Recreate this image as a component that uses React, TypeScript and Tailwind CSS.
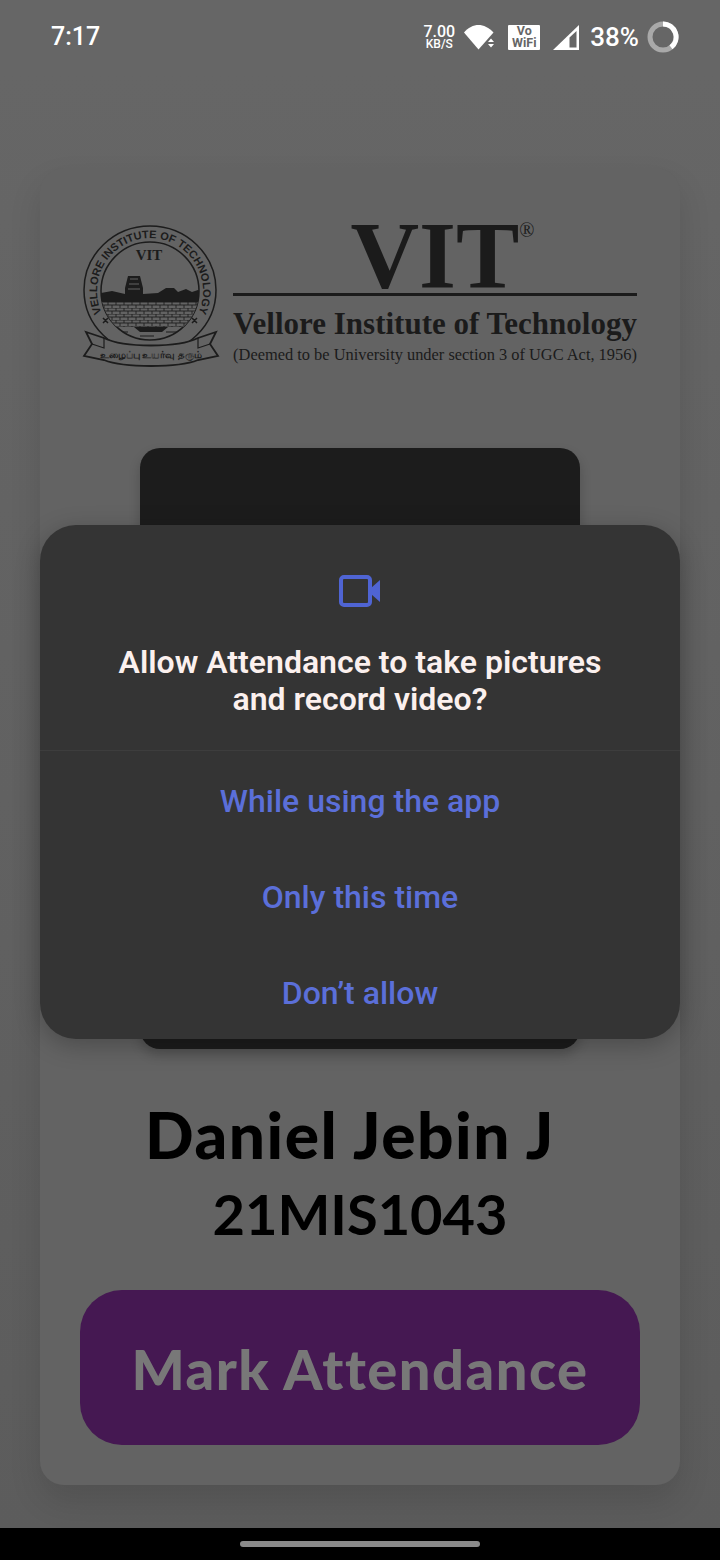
const roboto = "font-['Roboto',sans-serif]";

function WifiIcon() {
  return (
    <svg width="32" height="26" viewBox="0 0 32 26">
      <path d="M0 8.5C4 3.5 9.500 1 14.500 1S25 3.500 29.500 8.500L14.500 25.500Z" fill="#fff" />
      <path d="M27 14.500l3 3.500h-6ZM24 20h6l-3 3.500Z" fill="#fff" />
    </svg>
  );
}

function SignalIcon() {
  return (
    <svg width="28" height="27" viewBox="0 0 28 27">
      <path d="M1 26L27 1V26Z" fill="#fff" />
      <path d="M17.500 13.500L24.500 7V23.500H17.500Z" fill="#666" />
    </svg>
  );
}

function BatteryRing() {
  return (
    <svg width="32" height="32" viewBox="0 0 32 32">
      <circle cx="16" cy="16" r="13" fill="none" stroke="#a9a9a9" strokeWidth="5" />
      <path d="M16 3A13 13 0 0 1 24 26.300" fill="none" stroke="#fff" strokeWidth="5" />
    </svg>
  );
}

function StatusBar() {
  return (
    <div className={`flex h-[74px] items-center pl-[51px] pr-[41px] text-white ${roboto}`}>
      <span className="text-[25px] font-medium">7:17</span>
      <div className="ml-auto flex items-center">
        <div className="flex w-[34px] flex-col items-center font-medium">
          <span className="text-[16px] leading-[15px]">7.00</span>
          <span className="text-[12px] leading-[11px]">KB/S</span>
        </div>
        <div className="ml-[8px]">
          <WifiIcon />
        </div>
        <div className="ml-[12px] flex h-[25px] w-[32px] flex-col items-center justify-center rounded-[1px] bg-white text-[12.500px] leading-[12px] font-bold text-[#666]">
          <span>Vo</span>
          <span>WiFi</span>
        </div>
        <div className="ml-[12px]">
          <SignalIcon />
        </div>
        <span className="ml-[10px] text-[26px] leading-none font-medium">38%</span>
        <div className="ml-[8px]">
          <BatteryRing />
        </div>
      </div>
    </div>
  );
}

function Seal() {
  const ink = '#1c1c1c';
  return (
    <svg width="138" height="144" viewBox="0 0 138 144" className="shrink-0">
      <defs>
        <path id="sealArc" d="M22.300 94A53 53 0 1 1 113.700 94" />
        <clipPath id="sealInner">
          <circle cx="68" cy="67" r="49" />
        </clipPath>
        <pattern id="bricks" width="8" height="6" patternUnits="userSpaceOnUse">
          <path d="M0 0H8M0 3H8M2 0V3M6 3V6" stroke={ink} strokeWidth="0.9" />
        </pattern>
      </defs>
      <ellipse cx="68" cy="66" rx="66" ry="64" fill="none" stroke={ink} strokeWidth="1.500" />
      <circle cx="68" cy="67" r="49" fill="none" stroke={ink} strokeWidth="1.500" />
      <text fontFamily="Liberation Sans" fontSize="11" fontWeight="700" fill={ink}>
        <textPath href="#sealArc" startOffset="50%" textAnchor="middle">
          VELLORE INSTITUTE OF TECHNOLOGY
        </textPath>
      </text>
      <text x="67" y="36" textAnchor="middle" fontFamily="Liberation Serif" fontSize="15" fontWeight="700" fill={ink}>
        VIT
      </text>
      <g clipPath="url(#sealInner)">
        <path d="M14 80V70L30 67L43 70V64L46 52H58L61 64V70L76 69L84 64H92L96 68L104 65L110 68L116 66L124 69V80Z" fill={ink} />
        <path d="M48 55H56M47 60H57M46 65H58" stroke="#636363" strokeWidth="1" />
        <rect x="18" y="78" width="102" height="25" fill="#636363" />
        <rect x="18" y="78" width="102" height="25" fill="url(#bricks)" />
        <path d="M52 103H86L80 108H58Z" fill={ink} />
        <path d="M30 108H46M58 112H72M84 108H100" stroke={ink} strokeWidth="1" />
      </g>
      <path d="M21 94L26 99M26 94L21 99M110 94L115 99M115 94L110 99" stroke={ink} strokeWidth="1.500" />
      <path
        d="M22 114C42 124 96 124 116 114L134 108L128 120L136 132L116 136C96 144 42 144 22 136L2 132L10 120L4 108Z"
        fill="#636363"
        stroke={ink}
        strokeWidth="1.800"
      />
      <path d="M22 114V124L10 120M116 114V124L128 120" fill="none" stroke={ink} strokeWidth="1.200" />
      <text
        x="69"
        y="134"
        textAnchor="middle"
        fontFamily="Noto Sans, sans-serif"
        fontSize="10"
        fontWeight="700"
        fill={ink}
      >
        உழைப்பு உயர்வு தரும்
      </text>
    </svg>
  );
}

function Logo() {
  return (
    <div className="flex items-start pl-[42px] text-[#1b1b1b]">
      <Seal />
      <div className="ml-[13px] flex w-[404px] flex-col items-center font-['Liberation_Serif',serif]">
        <div className="relative mt-[-8px] text-[95px] leading-[80px] font-bold">
          VIT
          <span className="absolute top-[4px] right-[-15px] text-[20px] leading-none font-normal">®</span>
        </div>
        <div className="mt-[-3px] h-[3px] w-full bg-[#1b1b1b]" />
        <div className="mt-[12px] text-[31px] leading-[32px] font-bold whitespace-nowrap">
          Vellore Institute of Technology
        </div>
        <div className="mt-[5px] text-[16.400px] leading-[20px] whitespace-nowrap">
          (Deemed to be University under section 3 of UGC Act, 1956)
        </div>
      </div>
    </div>
  );
}

function PermissionDialog() {
  return (
    <div className={`absolute top-[525px] left-[40px] w-[640px] rounded-[36px] bg-[#343434] shadow-[0_6px_24px_rgba(0,0,0,0.25)] ${roboto}`}>
      <div className="flex h-[226px] flex-col items-center border-b border-[#3d3d3d] pt-[50px]">
        <svg width="42" height="32" viewBox="0 0 42 32">
          <rect x="2" y="2" width="29" height="28" rx="3" fill="none" stroke="#4f64d3" strokeWidth="4" />
          <path d="M32 13L41 5V27L32 19Z" fill="#4f64d3" />
        </svg>
        <h2 className="mt-[37px] text-center text-[32px] leading-[37px] font-semibold text-[#fbf0ee]">
          Allow Attendance to take pictures
          <br />
          and record video?
        </h2>
      </div>
      {['While using the app', 'Only this time', 'Don’t allow'].map(label => (
        <button
          key={label}
          className="block h-[96px] w-full pt-[4px] text-center text-[32px] font-medium text-[#5b6fd9]"
        >
          {label}
        </button>
      ))}
    </div>
  );
}

export default function App() {
  return (
    <div className="relative flex h-[1560px] w-[720px] flex-col overflow-hidden bg-[#666666]">
      <StatusBar />
      <div className="flex flex-1 flex-col bg-gradient-to-b from-[#666666] to-[#5c5c5c] px-[40px] pt-[94px]">
        <div className="flex h-[1317px] flex-col rounded-[24px] bg-[#636363] pt-[56px] shadow-[0_16px_32px_rgba(0,0,0,0.12)]">
          <Logo />
          <div className="mx-auto mt-[80px] h-[601px] w-[440px] shrink-0 rounded-[20px] bg-[#1c1c1c] shadow-[0_6px_12px_rgba(0,0,0,0.2)]" />
          <div className="mt-[51px] pr-[20px] text-center font-['Lato',sans-serif] text-[64px] leading-[70px] font-black tracking-[1.500px] text-black">
            Daniel Jebin J
          </div>
          <div className="mt-[13px] text-center font-['Lato',sans-serif] text-[56px] leading-[62px] font-bold text-black">
            21MIS1043
          </div>
          <button className="mx-auto mt-[45px] flex h-[155px] w-[560px] items-center justify-center rounded-[42px] bg-[#451852] pt-[2px] font-['Lato',sans-serif] text-[56px] font-black tracking-[1.500px] text-[#787878]">
            Mark Attendance
          </button>
        </div>
      </div>
      <div className="flex h-[32px] shrink-0 items-center justify-center bg-black">
        <div className="h-[6px] w-[240px] rounded-full bg-[#8a8a8a]" />
      </div>
      <PermissionDialog />
    </div>
  );
}
